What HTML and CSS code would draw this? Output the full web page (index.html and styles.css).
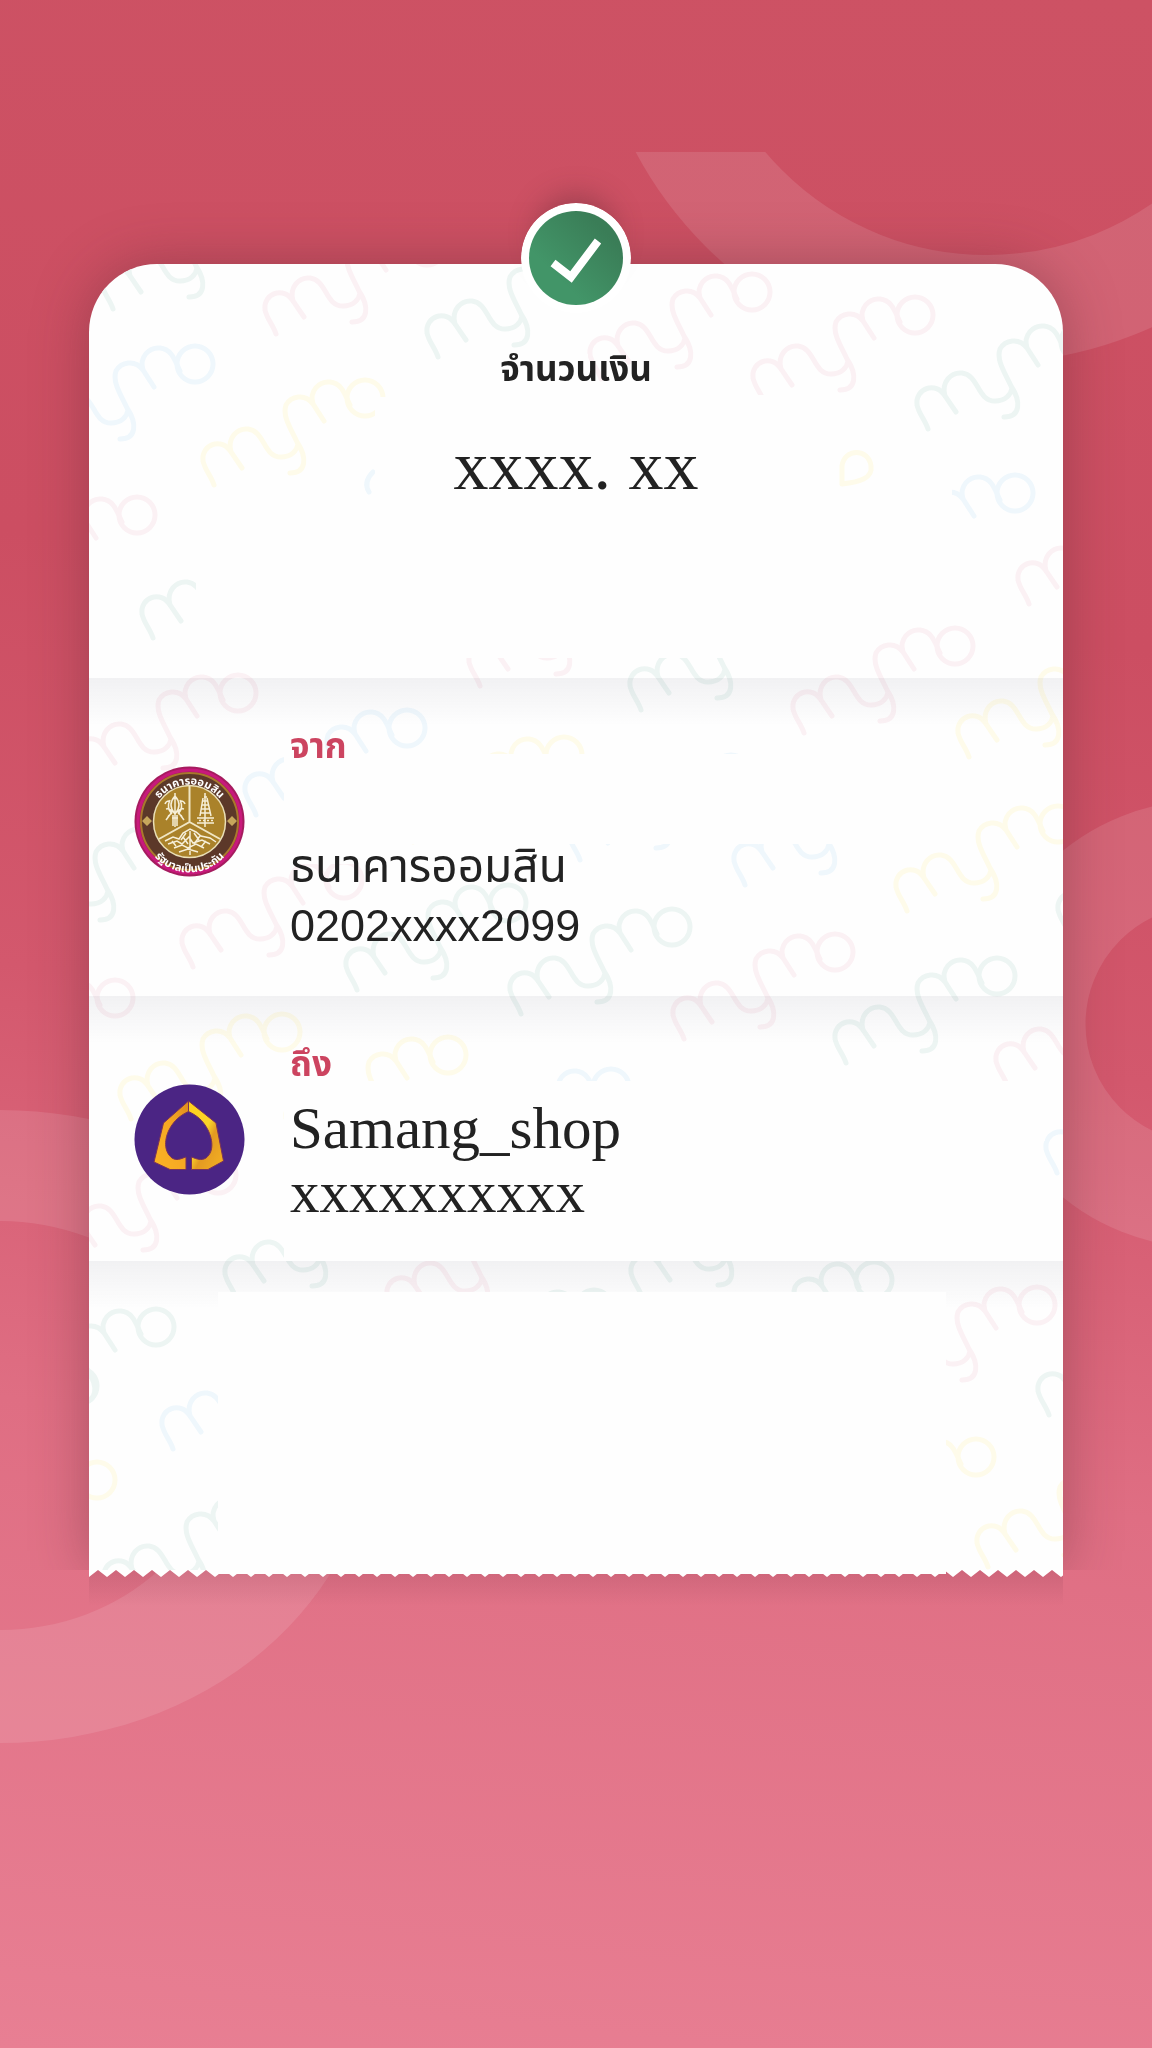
FILE: index.html
```html
<!DOCTYPE html>
<html lang="th">
<head>
<meta charset="utf-8">
<meta name="viewport" content="width=device-width, initial-scale=1">
<title>mymo</title>
<link rel="stylesheet" href="styles.css">
</head>
<body>
<svg class="backdrop" viewBox="0 0 1152 2048" preserveAspectRatio="xMidYMin slice" aria-hidden="true">
  <defs><clipPath id="below-bar"><rect x="0" y="152" width="1152" height="1896"/></clipPath></defs>
  <g class="rings" clip-path="url(#below-bar)">
    <circle cx="987" cy="-35" r="344" stroke-width="108"/>
    <circle cx="1204" cy="1024" r="171" stroke-width="105"/>
    <path d="M0 1110a373 316.500 0 0 1 0 633v-113a225 204.500 0 0 0 0-409z" class="ring-fill"/>
  </g>
</svg>
<main class="page">
  <article class="slip">
    <svg class="watermark" viewBox="89 264 974 1306" preserveAspectRatio="xMidYMin slice" aria-hidden="true">
      <defs>
        <g id="mymo">
          <path d="M0 0C-3 -9 -9 -15 -11 -24C-13 -41 8 -48 17 -33L28 -17M17 -33C13 -47 23 -57 34 -56C51 -54 49 -28 67 -28C77 -28 83 -34 84 -41M110 -64L99 -81C91 -92 77 -89 72 -80C68 -69 77 -56 83 -43C93 -28 93 -12 76 -12M99 -81C95 -94 105 -104 116 -103C128 -102 131 -90 136 -80"/>
          <circle cx="151" cy="-87" r="18"/>
        </g>
        <mask id="worn" maskUnits="userSpaceOnUse" x="89" y="264" width="974" height="1306">
          <rect x="89" y="264" width="974" height="1306" fill="#fff"/>
          <rect x="560" y="354" width="28" height="60"/>
          <rect x="700" y="395" width="120" height="30"/>
          <rect x="375" y="397" width="460" height="260"/>
          <rect x="200" y="515" width="620" height="143"/>
          <rect x="196" y="576" width="120" height="82"/>
          <rect x="835" y="487" width="117" height="100"/>
          <rect x="835" y="505" width="125" height="82"/>
          <rect x="284" y="754" width="640" height="90"/>
          <rect x="284" y="844" width="100" height="20"/>
          <rect x="284" y="1081" width="720" height="180"/>
          <rect x="900" y="1081" width="145" height="60"/>
        </mask>
      </defs>
      <g class="marks" mask="url(#worn)">
        <g class="pink">
          <use href="#mymo" x="276" y="334"/><use href="#mymo" x="601" y="379"/><use href="#mymo" x="764" y="402"/>
          <use href="#mymo" x="-14" y="602"/><use href="#mymo" x="1029" y="604"/><use href="#mymo" x="804" y="733"/>
          <use href="#mymo" x="480" y="686"/><use href="#mymo" x="87" y="780"/><use href="#mymo" x="193" y="967"/>
          <use href="#mymo" x="684" y="1039"/><use href="#mymo" x="-36" y="1085"/><use href="#mymo" x="1007" y="1085"/>
          <use href="#mymo" x="67" y="1262"/><use href="#mymo" x="398" y="1319"/><use href="#mymo" x="886" y="1392"/>
        </g>
        <g class="green">
          <use href="#mymo" x="113" y="309"/><use href="#mymo" x="438" y="357"/><use href="#mymo" x="928" y="429"/>
          <use href="#mymo" x="153" y="638"/><use href="#mymo" x="641" y="710"/><use href="#mymo" x="24" y="932"/>
          <use href="#mymo" x="357" y="990"/><use href="#mymo" x="521" y="1014"/><use href="#mymo" x="846" y="1063"/>
          <use href="#mymo" x="1069" y="934"/><use href="#mymo" x="236" y="1298"/><use href="#mymo" x="642" y="1297"/>
          <use href="#mymo" x="443" y="1395"/><use href="#mymo" x="723" y="1367"/><use href="#mymo" x="1049" y="1415"/>
          <use href="#mymo" x="5" y="1414"/><use href="#mymo" x="-72" y="1473"/><use href="#mymo" x="115" y="1602"/>
        </g>
        <g class="blue">
          <use href="#mymo" x="44" y="451"/><use href="#mymo" x="864" y="580"/><use href="#mymo" x="256" y="815"/>
          <use href="#mymo" x="580" y="860"/><use href="#mymo" x="745" y="885"/><use href="#mymo" x="460" y="1174"/>
          <use href="#mymo" x="1057" y="1173"/><use href="#mymo" x="173" y="1449"/>
          <path d="M373 472q-10 10-4 20"/>
        </g>
        <g class="yellow">
          <use href="#mymo" x="214" y="485"/><use href="#mymo" x="969" y="757"/><use href="#mymo" x="907" y="911"/>
          <use href="#mymo" x="413" y="842"/><use href="#mymo" x="131" y="1119"/><use href="#mymo" x="297" y="1142"/>
          <use href="#mymo" x="825" y="1544"/><use href="#mymo" x="-54" y="1567"/><use href="#mymo" x="988" y="1567"/>
          <use href="#mymo" x="1071" y="1520"/>
        </g>
      </g>
      <path class="loose" d="M842 484V466C844 448 869 448 871 466C873 478 860 482 842 484"/>
    </svg>

    <svg class="badge" viewBox="0 0 110 110" role="img" aria-label="สำเร็จ">
      <defs><linearGradient id="leaf" x1="1" y1="0" x2="0" y2="1"><stop offset="0.200" stop-color="#3a7d57"/><stop offset="0.700" stop-color="#429568"/></linearGradient></defs>
      <circle cx="55" cy="55" r="55" fill="#fff"/>
      <circle cx="55" cy="55" r="47" fill="url(#leaf)"/>
      <path d="M32 60L50 74L77 38" fill="none" stroke="#fff" stroke-width="8"/>
    </svg>

    <section class="amount">
      <h1 class="amount-label">จำนวนเงิน</h1>
      <p class="amount-value">xxxx. xx</p>
    </section>

    <section class="party">
      <svg class="logo" viewBox="0 0 111 111" role="img" aria-label="ธนาคารออมสิน">
        <defs>
          <path id="arc-top" d="M16 58A39.500 39.500 0 0 1 95 58"/>
          <path id="arc-bottom" d="M9 60A46.500 46.500 0 0 0 102 60"/>
        </defs>
        <circle cx="55.500" cy="55.500" r="55" fill="#a51c5e"/>
        <circle cx="55.500" cy="55.500" r="51.500" fill="none" stroke="#c8197c" stroke-width="3"/>
        <circle cx="55.500" cy="55.500" r="48.500" fill="#5c3829" stroke="#a9782c" stroke-width="2"/>
        <circle cx="55.500" cy="55.500" r="36" fill="#aa822a" stroke="#eadfb6" stroke-width="1.500"/>
        <path d="M55.500 20V56L25 73M55.500 56L86 73" fill="none" stroke="#f0e6c4" stroke-width="2"/>
        <path d="M8 55l5-5 5 5-5 5zM93 55l5-5 5 5-5 5z" fill="#c6a75c"/>
        <g fill="none" stroke="#f6efd8" stroke-width="1.500">
          <path d="M41 27v34M41 30q-8 9 0 18q8-9 0-18M36 34q-4 8 2 14M46 34q4 8-2 14M31 38q1-3 4-3M51 38q-1-3-4-3M32 43q4-1 6 3l-6 8M50 43q-4-1-6 3l6 8M35 49l-2 4M47 49l2 4M39 49v11M43 49v11M38 52h6"/>
          <path d="M71 27v34M70 31h3M69 35h5M68 39h7M67 43h9M66 47h11M63 52h17M63 57h17M65 54.500h2M69 54.500h2M73 54.500h2M77 54.500h2M69 32l-3 18M73 32l4 18"/>
          <path d="M31 75l8-4 6 2 4-6 7-4 6 3 5 4 9 2 6 4M34 78l9-3 5 3 7-7 4 6 9-3 8 4M40 82l8-3 6 3 8-4 8 4M45 86l9-3 10 3M56 65v24M52 67l-5 7M60 67l5 7M49 71l5 7M66 70l-6 8M38 75l4 5M72 75l-5 6"/>
        </g>
        <g class="seal-text">
          <text text-anchor="middle"><textPath href="#arc-top" startOffset="50%">ธนาคารออมสิน</textPath></text>
          <text text-anchor="middle"><textPath href="#arc-bottom" startOffset="50%">รัฐบาลเป็นประกัน</textPath></text>
        </g>
      </svg>
      <div class="party-text">
        <h2 class="party-label">จาก</h2>
        <p class="bank">ธนาคารออมสิน</p>
        <p class="account">0202xxxx2099</p>
      </div>
    </section>

    <section class="party">
      <svg class="logo" viewBox="0 0 111 111" role="img" aria-label="SCB">
        <defs>
          <linearGradient id="gold-l" x1="0" y1="1" x2="1" y2="0"><stop offset="0" stop-color="#fbb324"/><stop offset="0.600" stop-color="#f5a623"/><stop offset="1" stop-color="#dd8b1e"/></linearGradient>
          <linearGradient id="gold-r" x1="0" y1="0" x2="1" y2="1"><stop offset="0" stop-color="#ffd21a"/><stop offset="0.450" stop-color="#fbd329"/><stop offset="0.600" stop-color="#e39a22"/><stop offset="1" stop-color="#f5b223"/></linearGradient>
        </defs>
        <circle cx="55.500" cy="55.500" r="55" fill="#4b2584"/>
        <path d="M54.500 17L29.500 39L20 78L36 85.500H52V73C46 75 43 77 38 74C29 67 31 54 35 46C40 36 47 31 54.500 27.500z" fill="url(#gold-l)" stroke="#7a3358"/>
        <path d="M54.500 17L82 39L89.500 77L74 85.500H57.500V73C63 75 67 77 72 74C81 67 78 54 74 46C69 36 62 31 54.500 27.500z" fill="url(#gold-r)" stroke="#7a3358"/>
      </svg>
      <div class="party-text">
        <h2 class="party-label">ถึง</h2>
        <p class="payee">Samang_shop</p>
        <p class="payee">xxxxxxxxxx</p>
      </div>
    </section>

    <section class="note"><div class="note-blank"></div></section>
  </article>
  <div class="tear">
    <svg class="teeth" aria-hidden="true">
      <defs><pattern id="tooth" width="18" height="7" patternUnits="userSpaceOnUse"><path d="M0 0H18V7L9 0L0 7z" fill="#fff"/></pattern></defs>
      <rect width="100%" height="7" fill="url(#tooth)"/>
    </svg>
    <div class="tear-edge"></div>
  </div>
</main>
</body>
</html>
```
FILE: styles.css
```css
* {
  box-sizing: border-box;
  margin: 0;
}

body {
  position: relative;
  min-height: 100vh;
  background: linear-gradient(186deg, #cd5264 0%, #cc4e62 30%, #d3586d 50%, #df6e83 70%, #e87f93 100%);
  color: #222;
  font-family: "Liberation Sans", "Noto Sans Thai", "Noto Sans", sans-serif;
}

.backdrop {
  position: absolute;
  inset: 0;
  width: 100%;
  height: 100%;
}

.rings {
  fill: none;
  stroke: #fff;
  opacity: 0.11;
}

.ring-fill {
  fill: #fff;
  stroke: none;
}

.page {
  position: relative;
  padding: 264px 89px 120px;
}

.slip {
  position: relative;
  border-radius: 68px 68px 0 0;
  background: #fefefe;
  box-shadow: 0 0 56px rgba(90, 40, 50, 0.4);
  clip-path: inset(-120px -89px 0 -89px);
}

.watermark {
  position: absolute;
  inset: 0;
  width: 100%;
  height: 100%;
  border-radius: 68px 68px 0 0;
}

.marks,
.loose {
  fill: none;
  stroke-width: 5;
  stroke-linecap: round;
}

.pink { stroke: #fbf1f4; }
.green { stroke: #edf5f3; }
.blue { stroke: #eff7fc; }
.yellow,
.loose { stroke: #fefbea; }

.badge {
  position: absolute;
  top: -61px;
  left: 50%;
  width: 110px;
  height: 110px;
  margin-left: -55px;
  border-radius: 50%;
  box-shadow: 0 -24px 28px -16px rgba(90, 40, 50, 0.4);
}

.amount {
  position: relative;
  padding: 81px 24px 172px;
  text-align: center;
}

.amount-label {
  margin-bottom: 33px;
  font-size: 35px;
  line-height: 48px;
}

.amount-value {
  font: 70px/80px "Liberation Serif", serif;
}

.party {
  position: relative;
  display: flex;
  gap: 45px;
  padding: 48px 45px 40px;
  background: linear-gradient(rgba(40, 40, 70, 0.06), rgba(40, 40, 70, 0) 48px);
}

.logo {
  flex: none;
  width: 111px;
  height: 111px;
  margin-top: 40px;
}

.seal-text {
  fill: #fff;
  font-size: 11px;
  font-weight: bold;
}

.party-label {
  color: #cc4460;
  font-size: 35px;
  line-height: 40px;
}

.bank {
  margin-top: 72px;
  font-size: 46px;
  line-height: 56px;
}

.account {
  margin-top: 2px;
  font-size: 45px;
  line-height: 60px;
}

.payee {
  font: 59px/64px "Liberation Serif", serif;
}

.party-label + .payee {
  margin-top: 12px;
}

.party:has(.payee) {
  padding-bottom: 37px;
}

.note {
  position: relative;
  padding: 31px 117px 0 129px;
  background: linear-gradient(rgba(40, 40, 70, 0.06), rgba(40, 40, 70, 0) 48px);
}

.note-blank {
  height: 278px;
  background: #fefefe;
}

.tear {
  height: 36px;
  background: linear-gradient(rgba(120, 50, 70, 0.18), rgba(120, 50, 70, 0));
}

.teeth {
  display: block;
  width: 100%;
  height: 7px;
}

.tear-edge {
  height: 4px;
  margin: -7px 117px 0 129px;
  background: #fefefe;
}
```
